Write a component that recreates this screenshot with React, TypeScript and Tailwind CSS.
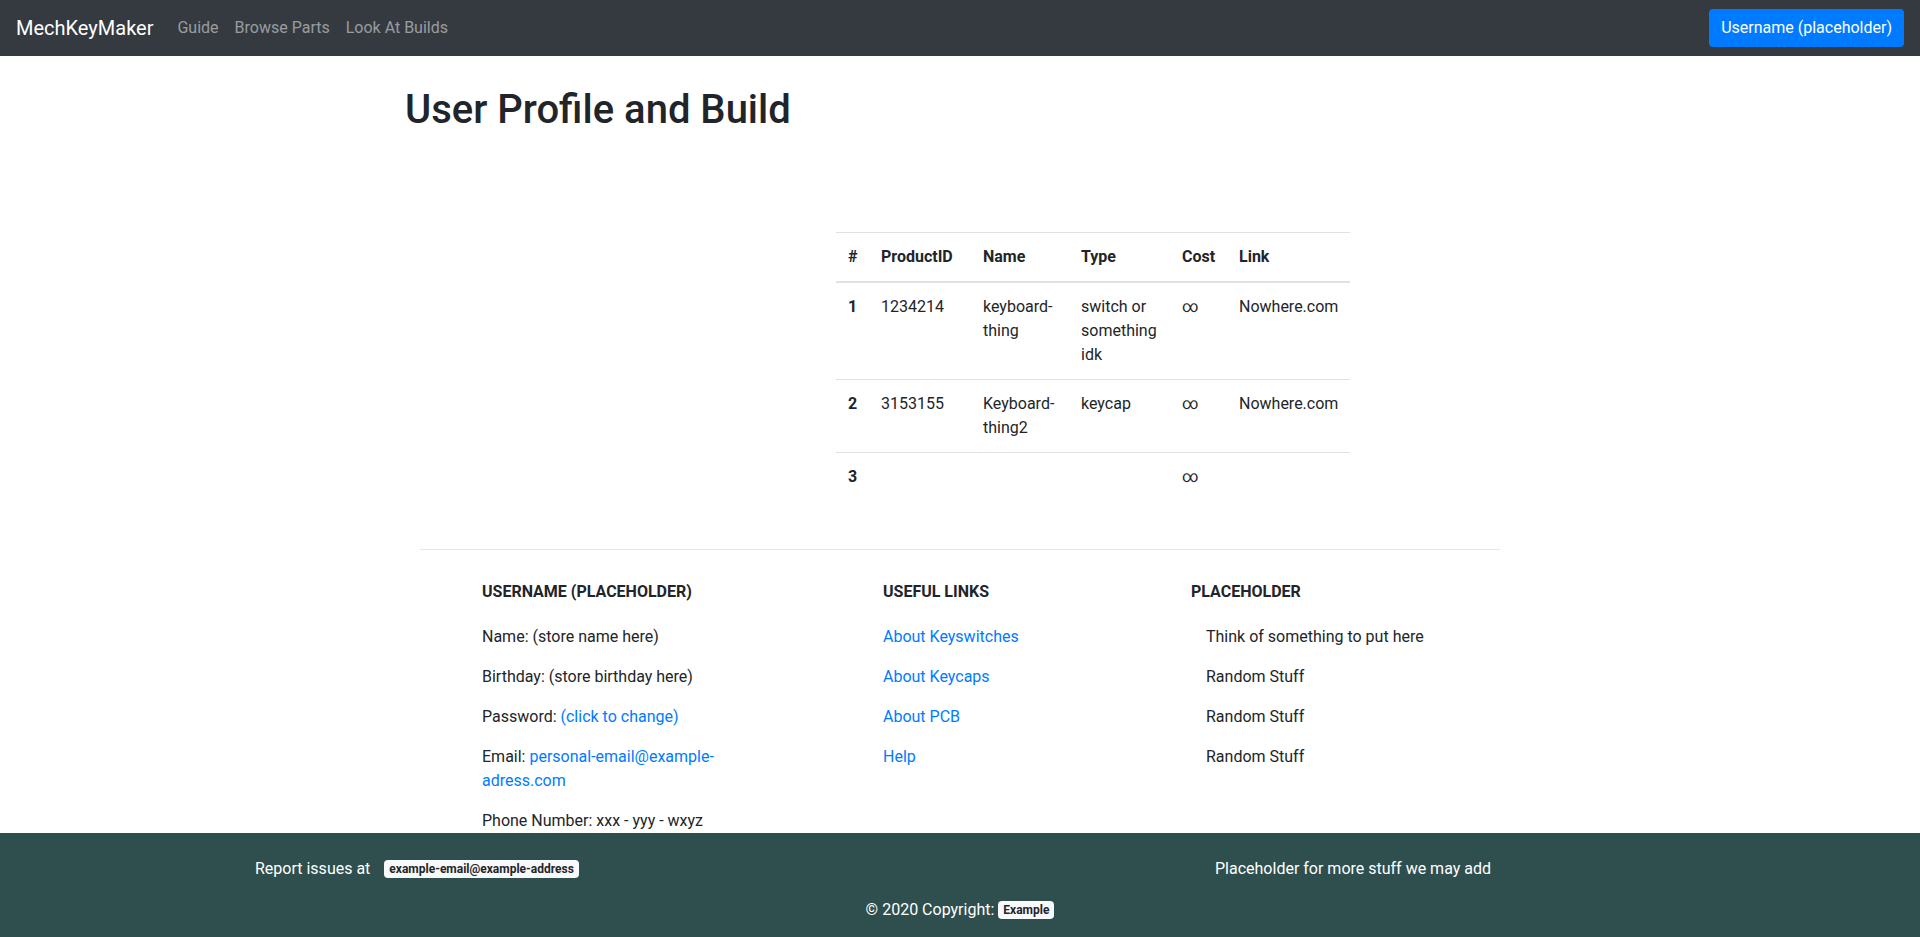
export default function App() {
  const rows = [
    { n: '1', id: '1234214', name: <>keyboard-<br />thing</>, type: <>switch or<br />something<br />idk</>, cost: '∞', link: 'Nowhere.com' },
    { n: '2', id: '3153155', name: <>Keyboard-<br />thing2</>, type: <>keycap</>, cost: '∞', link: 'Nowhere.com' },
    { n: '3', id: '', name: <></>, type: <></>, cost: '∞', link: '' },
  ];
  return (
    <div className="min-h-[937px] bg-white text-[#212529] text-[16px] leading-6 font-['Roboto',sans-serif]">
      {/* Navbar */}
      <nav className="h-[56px] bg-[#343a40] flex items-center px-4">
        <span className="text-[20px] leading-[30px] text-white mr-4">MechKeyMaker</span>
        <a className="px-2 text-white/50">Guide</a>
        <a className="px-2 text-white/50">Browse Parts</a>
        <a className="px-2 text-white/50">Look At Builds</a>
        <button className="ml-auto h-[38px] px-3 rounded bg-[#007bff] text-white leading-6">Username (placeholder)</button>
      </nav>

      {/* Main */}
      <div className="w-[1110px] mx-auto">
        <h1 className="mt-[30px] text-[40px] leading-[48px] font-medium">User Profile and Build</h1>
        <table className="mt-[98px] ml-[431px] w-[514px] table-fixed border-collapse">
          <colgroup>
            <col className="w-[33px]" />
            <col className="w-[102px]" />
            <col className="w-[98px]" />
            <col className="w-[101px]" />
            <col className="w-[57px]" />
            <col className="w-[123px]" />
          </colgroup>
          <thead>
            <tr className="border-t border-[#dee2e6] border-b-2">
              {['#', 'ProductID', 'Name', 'Type', 'Cost', 'Link'].map((h) => (
                <th key={h} className="p-3 text-left font-bold align-bottom whitespace-nowrap">{h}</th>
              ))}
            </tr>
          </thead>
          <tbody>
            {rows.map((r) => (
              <tr key={r.n} className="border-t border-[#dee2e6]">
                <th className="p-3 text-left font-bold align-top">{r.n}</th>
                <td className="p-3 align-top">{r.id}</td>
                <td className="p-3 align-top">{r.name}</td>
                <td className="p-3 align-top">{r.type}</td>
                <td className="p-3 align-top">{r.cost}</td>
                <td className="p-3 align-top whitespace-nowrap">{r.link}</td>
              </tr>
            ))}
          </tbody>
        </table>
      </div>

      {/* Info section */}
      <div className="w-[1080px] mx-auto mt-[48px] border-t border-[#e6e6e6] flex pt-[30px]">
        <div className="ml-[62px] w-[401px]">
          <h6 className="font-bold uppercase mb-[21px]">Username (placeholder)</h6>
          <p className="mb-4">Name: (store name here)</p>
          <p className="mb-4">Birthday: (store birthday here)</p>
          <p className="mb-4">Password: <a className="text-[#007bff]">(click to change)</a></p>
          <p className="mb-4">Email: <a className="text-[#007bff]">personal-email@example-<br />adress.com</a></p>
          <p>Phone Number: xxx - yyy - wxyz</p>
        </div>
        <div className="w-[308px]">
          <h6 className="font-bold uppercase mb-[21px]">Useful links</h6>
          <p className="mb-4"><a className="text-[#007bff]">About Keyswitches</a></p>
          <p className="mb-4"><a className="text-[#007bff]">About Keycaps</a></p>
          <p className="mb-4"><a className="text-[#007bff]">About PCB</a></p>
          <p className="mb-4"><a className="text-[#007bff]">Help</a></p>
        </div>
        <div className="flex-1">
          <h6 className="font-bold uppercase mb-[21px]">Placeholder</h6>
          <p className="mb-4 pl-[15px]">Think of something to put here</p>
          <p className="mb-4 pl-[15px]">Random Stuff</p>
          <p className="mb-4 pl-[15px]">Random Stuff</p>
          <p className="mb-4 pl-[15px]">Random Stuff</p>
        </div>
      </div>

      {/* Footer */}
      <footer className="h-[104px] bg-[#2f4f4f] text-white pt-[24px]">
        <div className="flex h-6 items-center">
          <div className="w-[1215px] pl-[255px] flex items-center">
            <span>Report issues at</span>
            <span className="ml-[14px] h-[18px] px-[5px] inline-flex items-center rounded bg-[#f8f9fa] text-[#212529] text-[12px] font-bold leading-none">example-email@example-address</span>
          </div>
          <div>Placeholder for more stuff we may add</div>
        </div>
        <div className="mt-[17px] h-6 flex items-center justify-center">
          <span>© 2020 Copyright:</span>
          <span className="ml-[4px] h-[18px] px-[5px] inline-flex items-center rounded bg-[#f8f9fa] text-[#212529] text-[12px] font-bold leading-none">Example</span>
        </div>
      </footer>
    </div>
  );
}
